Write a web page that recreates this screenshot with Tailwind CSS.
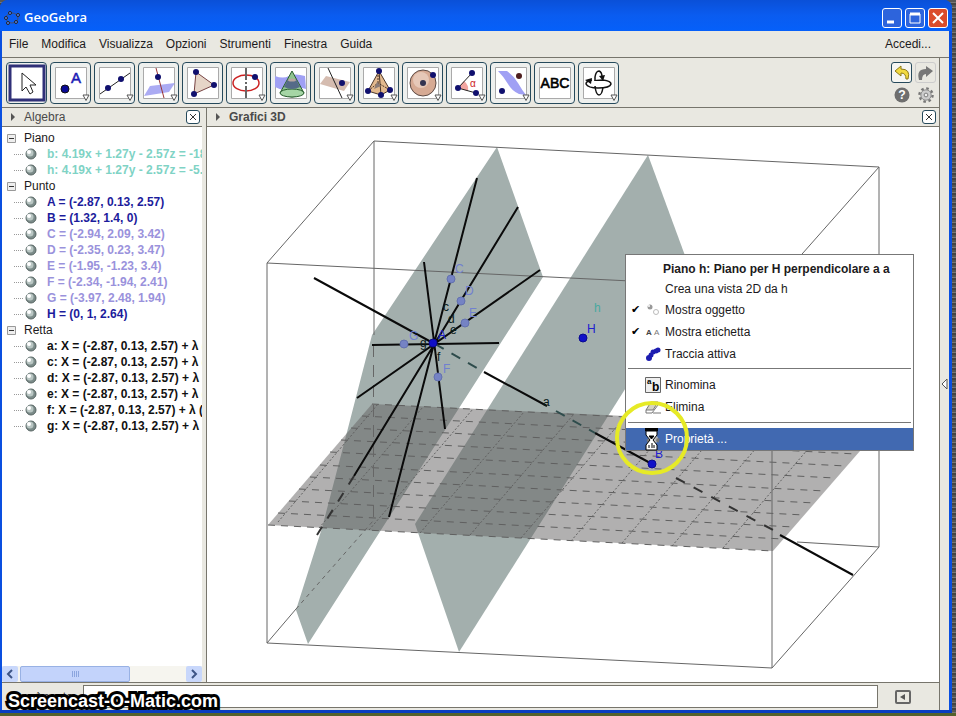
<!doctype html>
<html lang="it">

<head>
    <meta charset="UTF-8">
    <meta name="viewport" content="width=device-width, initial-scale=1.0">
    <title>GeoGebra</title>
    <script src="https://cdn.jsdelivr.net/npm/@tailwindcss/browser@4"></script>
</head>

<body class="h-screen overflow-hidden bg-[#55602c] font-['Liberation_Sans',Arial,sans-serif] text-xs text-[#1c1a20]">
    <!-- Shared icon parts -->
    <svg class="hidden">
        <symbol id="drop" viewBox="0 0 8 8" overflow="visible">
            <path d="M1 1h6L4 6.500z" fill="#fff" stroke="#555" />
        </symbol>
        <symbol id="ball" viewBox="0 0 12 12">
            <circle cx="6" cy="6" r="5" fill="#7b8b89" stroke="#566462" />
            <circle cx="5" cy="5" r="3.500" fill="#b9c6c3" />
            <circle cx="4" cy="4" r="2" fill="#fff" />
        </symbol>
        <symbol id="cross" viewBox="0 0 8 8">
            <path d="M1 1l6 6M7 1l-6 6" stroke="#333" />
        </symbol>
    </svg>

    <div class="flex h-full flex-col pb-[3px]">
        <div class="flex min-h-0 flex-1 bg-[repeating-linear-gradient(#555_0_2px,#777_2px_3px,#444_3px_5px)] pr-1">
            <div class="flex min-w-0 flex-1 flex-col rounded-t-lg border-b-[3px] border-[#0a3cc0] bg-[#0a4fe0]">

                <!-- Title bar -->
                <header
                    class="flex h-[31px] shrink-0 items-center rounded-t-lg bg-linear-to-b from-[#0a50d8] via-[#0a5cf0] to-[#0560fa] pt-1 pr-1 pl-1">
                    <svg class="size-4" viewBox="0 0 16 16">
                        <ellipse cx="8" cy="8" rx="6" ry="5" fill="none" stroke="#444e70" />
                        <g fill="#5a8aff" stroke="#222">
                            <circle cx="2" cy="8" r="1.500" />
                            <circle cx="6" cy="3" r="1.500" />
                            <circle cx="14" cy="5" r="1.500" />
                            <circle cx="12" cy="12" r="1.500" />
                            <circle cx="4" cy="13" r="1.500" />
                        </g>
                    </svg>
                    <h1 class="ml-1 flex-1 font-['Open_Sans',sans-serif] text-[13px] font-semibold text-white">GeoGebra</h1>
                    <div class="flex gap-[3px]">
                        <button aria-label="Riduci" class="size-5 rounded-[3px] border border-white bg-[#2d64dc]">
                            <svg viewBox="0 0 18 18"><path d="M4 13h7" stroke="#fff" stroke-width="3" /></svg>
                        </button>
                        <button aria-label="Ingrandisci" class="size-5 rounded-[3px] border border-white bg-[#2d64dc]">
                            <svg viewBox="0 0 18 18"><path d="M4 5h10v9H4z" fill="none" stroke="#fff" /><path d="M4 5h10" stroke="#fff" stroke-width="3" /></svg>
                        </button>
                        <button aria-label="Chiudi" class="size-5 rounded-[3px] border border-white bg-[#db4c2b]">
                            <svg viewBox="0 0 18 18"><path d="M4 4l10 10M14 4L4 14" stroke="#fff" stroke-width="2" /></svg>
                        </button>
                    </div>
                </header>

                <div class="mr-[3px] ml-0.5 flex min-h-0 flex-1 flex-col bg-[#e9e8e1]">
                    <!-- Menu bar -->
                    <nav class="flex h-[27px] shrink-0 items-center gap-[13px] border-b border-[#77756c] pr-[18px] pl-[7px]">
                        <a href="#">File</a>
                        <a href="#">Modifica</a>
                        <a href="#">Visualizza</a>
                        <a href="#">Opzioni</a>
                        <a href="#">Strumenti</a>
                        <a href="#">Finestra</a>
                        <a href="#" class="flex-1">Guida</a>
                        <a href="#">Accedi...</a>
                    </nav>

                    <div class="flex min-h-0 flex-1">
                        <main class="flex min-w-0 flex-1 flex-col border-r border-[#77756c]">
                            <!-- Toolbar -->
                            <div class="flex h-[50px] shrink-0 items-start justify-between border-b border-[#77756c] pt-1 pr-[3px] pl-1">
                                <div class="flex gap-[3px] *:flex *:h-[42px] *:w-[41px] *:items-center *:justify-center *:rounded *:border *:border-[#264a5c] *:bg-[#eef0ee] **:[svg]:size-8 **:[svg]:overflow-visible">
                                    <button aria-label="Muovi">
                                        <svg viewBox="0 0 32 32">
                                            <path d="M-1-1h34v34H-1z" fill="#fff" stroke="#303078" stroke-width="3" />
                                            <path d="M11 6v18l4-4 4 7 3-2-3-7h6z" fill="#fff" stroke="#222" />
                                        </svg>
                                    </button>
                                    <button aria-label="Punto">
                                        <svg viewBox="0 0 32 32">
                                            <path d="M.5.5h31v31H.5z" fill="#fff" stroke="#aaa" />
                                            <circle cx="10" cy="22" r="4" fill="#0a0a96" stroke="#111" />
                                            <text x="16" y="16" font-size="15" fill="#1a1ab4" stroke="#1a1ab4" stroke-width=".5">A</text>
                                            <use href="#drop" x="27" y="27" width="8" height="8" />
                                        </svg>
                                    </button>
                                    <button aria-label="Retta">
                                        <svg viewBox="0 0 32 32">
                                            <path d="M.5.5h31v31H.5z" fill="#fff" stroke="#aaa" />
                                            <path d="M1 27L31 6" stroke="#222" />
                                            <circle cx="9" cy="21" r="3" fill="#10106e" />
                                            <circle cx="22" cy="12" r="3" fill="#10106e" />
                                            <use href="#drop" x="27" y="27" width="8" height="8" />
                                        </svg>
                                    </button>
                                    <button aria-label="Retta perpendicolare">
                                        <svg viewBox="0 0 32 32">
                                            <path d="M.5.5h31v31H.5z" fill="#fff" stroke="#aaa" />
                                            <path d="M7 19l25-3-6 9-25 4z" fill="#9696f0" fill-opacity=".8" />
                                            <path d="M13 1l8 30" stroke="#933" />
                                            <circle cx="15" cy="10" r="3" fill="#10106e" />
                                            <use href="#drop" x="27" y="27" width="8" height="8" />
                                        </svg>
                                    </button>
                                    <button aria-label="Poligono">
                                        <svg viewBox="0 0 32 32">
                                            <path d="M.5.5h31v31H.5z" fill="#fff" stroke="#aaa" />
                                            <path d="M9 5l18 13L7 27z" fill="#e6d5c8" stroke="#744" />
                                            <g fill="#10106e">
                                                <circle cx="9" cy="5" r="3" />
                                                <circle cx="27" cy="18" r="3" />
                                                <circle cx="7" cy="27" r="3" />
                                            </g>
                                        </svg>
                                    </button>
                                    <button aria-label="Circonferenza">
                                        <svg viewBox="0 0 32 32">
                                            <path d="M.5.5h31v31H.5z" fill="#fff" stroke="#aaa" />
                                            <ellipse cx="15" cy="16" rx="13" ry="8" fill="none" stroke="#c22" stroke-width="1.500" />
                                            <path d="M15 1v12M15 15v2M15 19v12" stroke="#666" stroke-width="2" />
                                            <circle cx="24" cy="10" r="3" fill="#10106e" />
                                            <use href="#drop" x="27" y="27" width="8" height="8" />
                                        </svg>
                                    </button>
                                    <button aria-label="Intersezione">
                                        <svg viewBox="0 0 32 32">
                                            <path d="M.5.5h31v31H.5z" fill="#fff" stroke="#aaa" />
                                            <path d="M0 9q8 3 14 0t16 0l1 13q-8-3-15 0T0 20z" fill="#a0a0f4" />
                                            <path d="M17 4L5 26q12 8 24 0z" fill="#8fc48f" stroke="#275c2d" />
                                            <ellipse cx="17" cy="26" rx="12" ry="4" fill="#a5d5a5" stroke="#275c2d" />
                                            <path d="M13 12h8l4 8q-8 4-16 0z" fill="#556a88" />
                                            <ellipse cx="17" cy="13" rx="4" ry="1.500" fill="#b9a8a0" />
                                        </svg>
                                    </button>
                                    <button aria-label="Piano">
                                        <svg viewBox="0 0 32 32">
                                            <path d="M.5.5h31v31H.5z" fill="#fff" stroke="#aaa" />
                                            <path d="M7 9l24 6-6 9L1 17z" fill="#d5bcb0" />
                                            <path d="M9 1l14 30" stroke="#222" />
                                            <circle cx="23" cy="16" r="3" fill="#10106e" />
                                            <use href="#drop" x="27" y="27" width="8" height="8" />
                                        </svg>
                                    </button>
                                    <button aria-label="Piramide">
                                        <svg viewBox="0 0 32 32">
                                            <path d="M.5.5h31v31H.5z" fill="#fff" stroke="#aaa" />
                                            <path d="M16 4L5 24l13 4 9-5z" fill="#e3b98e" stroke="#4a3528" />
                                            <path d="M16 4l2 24" fill="none" stroke="#4a3528" />
                                            <path d="M5 24l10-8 12 7M15 16V5" fill="none" stroke="#4a3528" stroke-dasharray="2 1" />
                                            <path d="M14 15l4 4-7 3z" fill="#8b7c78" />
                                            <g fill="#10106e">
                                                <circle cx="16" cy="4" r="3" />
                                                <circle cx="5" cy="24" r="3" />
                                                <circle cx="18" cy="28" r="3" />
                                                <circle cx="27" cy="23" r="3" />
                                            </g>
                                            <use href="#drop" x="27" y="27" width="8" height="8" />
                                        </svg>
                                    </button>
                                    <button aria-label="Sfera">
                                        <svg viewBox="0 0 32 32">
                                            <path d="M.5.5h31v31H.5z" fill="#fff" stroke="#aaa" />
                                            <circle cx="16" cy="16" r="13" fill="#d6aa94" stroke="#5c4a44" />
                                            <circle cx="14" cy="13" r="8" fill="#e6c8b8" />
                                            <circle cx="16" cy="16" r="3" fill="#333350" />
                                            <circle cx="26" cy="8" r="3" fill="#10106e" />
                                            <use href="#drop" x="27" y="27" width="8" height="8" />
                                        </svg>
                                    </button>
                                    <button aria-label="Angolo">
                                        <svg viewBox="0 0 32 32">
                                            <path d="M.5.5h31v31H.5z" fill="#fff" stroke="#aaa" />
                                            <path d="M7 21l6-7q5 4 4 10z" fill="#f2a5a0" />
                                            <path d="M21 6L7 21l18 5" fill="none" stroke="#222" />
                                            <g fill="#10106e">
                                                <circle cx="21" cy="6" r="3" />
                                                <circle cx="7" cy="21" r="3" />
                                                <circle cx="25" cy="26" r="3" />
                                            </g>
                                            <text x="19" y="20" font-size="10" fill="#c22">α</text>
                                            <use href="#drop" x="27" y="27" width="8" height="8" />
                                        </svg>
                                    </button>
                                    <button aria-label="Simmetria">
                                        <svg viewBox="0 0 32 32">
                                            <path d="M.5.5h31v31H.5z" fill="#fff" stroke="#aaa" />
                                            <path d="M3 4h9q7 5 11 12t8 12l-7-1q-7-3-11-10T3 4z" fill="#a0a0f4" />
                                            <circle cx="7" cy="24" r="3" fill="#10106e" />
                                            <circle cx="24" cy="9" r="3" fill="#4e1e1e" />
                                            <use href="#drop" x="27" y="27" width="8" height="8" />
                                        </svg>
                                    </button>
                                    <button aria-label="Testo">
                                        <svg viewBox="0 0 32 32">
                                            <path d="M.5.5h31v31H.5z" fill="#fff" stroke="#aaa" />
                                            <text x="16" y="21" font-size="14" text-anchor="middle" fill="#000" stroke="#000" stroke-width=".6">ABC</text>
                                        </svg>
                                    </button>
                                    <button aria-label="Ruota la vista">
                                        <svg viewBox="0 0 32 32">
                                            <path d="M.5.5h31v31H.5z" fill="#fff" stroke="#aaa" />
                                            <g fill="none" stroke="#111" stroke-width="1.500">
                                                <path d="M12 14V10q1-6 4-6 3 1 3 6M12 19q1 9 4 9t4-8" />
                                                <path d="M9 13q-6 1-6 4 2 4 12 4 12 0 13-4 0-3-8-4-8 0-8 1" />
                                            </g>
                                            <path d="M16 9l6-1-2 6zM2 13l7-2-1 6z" fill="#111" />
                                            <use href="#drop" x="27" y="27" width="8" height="8" />
                                        </svg>
                                    </button>
                                </div>
                                <div class="grid grid-cols-2 place-items-center gap-x-[3px] gap-y-1">
                                    <button aria-label="Annulla" class="size-[21px] rounded-[3px] border border-[#264a5c] bg-[#f6f6f2]">
                                        <svg viewBox="0 0 19 19">
                                            <path d="M9 3L3 8l6 5v-3q5 0 5 6h2q3-10-7-10z" fill="#f2da40" stroke="#8d7a18" />
                                        </svg>
                                    </button>
                                    <button aria-label="Ripeti" class="size-[21px] rounded-[3px] border border-[#ccc]">
                                        <svg viewBox="0 0 19 19">
                                            <path d="M10 3l7 5-7 6v-3q-4 0-4 6H3Q0 6 10 6z" fill="#777" />
                                        </svg>
                                    </button>
                                    <button aria-label="Aiuto">
                                        <svg class="size-4" viewBox="0 0 17 17">
                                            <circle cx="8.500" cy="8.500" r="8" fill="#6e6e6e" />
                                            <text x="8.500" y="13" font-size="13" font-weight="bold" text-anchor="middle" fill="#fff">?</text>
                                        </svg>
                                    </button>
                                    <button aria-label="Impostazioni">
                                        <svg class="size-4" viewBox="0 0 17 17">
                                            <circle cx="8.500" cy="8.500" r="7" fill="none" stroke="#777" stroke-width="2.500" stroke-dasharray="2.750" />
                                            <circle cx="8.500" cy="8.500" r="5.500" fill="#ccc" stroke="#888" />
                                            <circle cx="8.500" cy="8.500" r="2" fill="#eee" stroke="#777" />
                                        </svg>
                                    </button>
                                </div>
                            </div>

                            <div class="flex min-h-0 flex-1">
                                <!-- Algebra view -->
                                <aside class="flex w-[205px] shrink-0 flex-col border-r border-[#77756c] pr-1">
                                    <div class="flex h-[19px] shrink-0 items-center border-b border-[#77756c] pr-0.5 pl-2">
                                        <svg class="size-2" viewBox="0 0 8 8"><path d="M1 0l4 4-4 4z" fill="#555" /></svg>
                                        <h2 class="ml-1.5 flex-1 text-[#4a4a4a]">Algebra</h2>
                                        <button aria-label="Chiudi Algebra" class="flex size-3.5 items-center justify-center rounded-[3px] border border-[#264a5c] bg-white">
                                            <svg class="size-2"><use href="#cross" /></svg>
                                        </button>
                                    </div>
                                    <div class="min-h-0 flex-1 overflow-hidden bg-white pt-[3px]">
                                        <ul id="tree" class="leading-4 whitespace-nowrap"></ul>
                                    </div>
                                    <!-- Horizontal scrollbar -->
                                    <div class="flex h-4 shrink-0 bg-[#f6f5ef]">
                                        <button aria-label="Scorri a sinistra" class="flex w-4 items-center justify-center rounded-xs bg-[#c8d7fb]">
                                            <svg class="size-2.5" viewBox="0 0 10 10"><path d="M7 1L3 5l4 4" fill="none" stroke="#3d5486" stroke-width="2" /></svg>
                                        </button>
                                        <div class="flex flex-1 pl-0.5">
                                            <div class="flex w-[110px] items-center justify-center gap-px rounded-xs border border-[#98b1e4] bg-[#c3d3fb]">
                                                <i class="h-1.5 w-px bg-[#8ba5de]"></i>
                                                <i class="h-1.5 w-px bg-[#8ba5de]"></i>
                                                <i class="h-1.5 w-px bg-[#8ba5de]"></i>
                                                <i class="h-1.5 w-px bg-[#8ba5de]"></i>
                                            </div>
                                        </div>
                                        <button aria-label="Scorri a destra" class="flex w-4 items-center justify-center rounded-xs bg-[#c8d7fb]">
                                            <svg class="size-2.5" viewBox="0 0 10 10"><path d="M3 1l4 4-4 4" fill="none" stroke="#3d5486" stroke-width="2" /></svg>
                                        </button>
                                    </div>
                                </aside>

                                <!-- 3D view -->
                                <section class="flex min-w-0 flex-1 flex-col">
                                    <div class="flex h-[19px] shrink-0 items-center border-b border-[#77756c] pr-[3px] pl-2">
                                        <svg class="size-2" viewBox="0 0 8 8"><path d="M1 0l4 4-4 4z" fill="#555" /></svg>
                                        <h2 class="ml-1.5 flex-1 font-bold text-[#4a4a4a]">Grafici 3D</h2>
                                        <button aria-label="Chiudi Grafici 3D" class="flex size-3.5 items-center justify-center rounded-[3px] border border-[#264a5c] bg-white">
                                            <svg class="size-2"><use href="#cross" /></svg>
                                        </button>
                                    </div>
                                    <div class="relative min-h-0 flex-1 bg-white">
                                        <svg class="size-full" viewBox="207 127 732 555" preserveAspectRatio="xMinYMin" font-size="12">
                                            <!-- Planes b and h -->
                                            <g fill="#a3afad">
                                                <path d="M497 147l46 130-235 367-12-34 26-82 25-96 25-97z" />
                                                <path d="M648 155l46 125-235 372-44-128z" />
                                            </g>
                                            <!-- Base plane with its grid -->
                                            <path d="M372 404l508 24-107 123-505-26z" fill="#646262" fill-opacity=".5" />
                                            <g fill="none" stroke="#606060">
                                                <path stroke-dasharray="7 6" d="M372 404l508 26M362 416l505 26M351 428l505 26M341 440l505 26M330 452l505 26M320 465l505 26M310 477l505 26M299 489l505 26M289 501l505 26M278 513l505 26M268 525l505 26" />
                                                <path stroke-dasharray="2 2" d="M278 522l100-118M319 528l104-121M369 530l104-121M420 533l104-121M470 535l104-121M521 538l104-121M571 541l104-121M622 543l104-121M672 546l104-121M723 548l104-121" />
                                            </g>
                                            <!-- Bounding box -->
                                            <g fill="none" stroke="#666">
                                                <path d="M267 643V263l107-122 505 26v380L772 668zM267 263l505 25V668M772 288l107-121M374 141v194M267 643l29-34M797 542l82 5" />
                                                <path stroke-dasharray="4 4" d="M296 609l77-88" />
                                                <path stroke-dasharray="12 8" d="M373.500 345v176" />
                                            </g>
                                            <!-- Lines -->
                                            <g fill="none" stroke="#0a0a0a" stroke-width="2">
                                                <path d="M314 278l119 65M484 372l63 34M595 433l57 31M780 535l73 40M477 178l-88 339M518 207L354 476M540 270L357 398M424 262l21 167M372 345l127-2" />
                                                <path stroke="#2e4c4c" stroke-dasharray="10 9" d="M435 344l49 28M556 411l39 22" />
                                                <path stroke="#333" stroke-dasharray="10 10" d="M354 476l-37 59M676 478l97 52" />
                                            </g>
                                            <!-- Points -->
                                            <g fill="#7583c4" stroke="#6371b0">
                                                <circle cx="451" cy="279" r="4" />
                                                <circle cx="461" cy="301" r="4" />
                                                <circle cx="465" cy="323" r="4" />
                                                <circle cx="404" cy="344" r="4" />
                                                <circle cx="438" cy="377" r="4" />
                                            </g>
                                            <g fill="#1010c8" stroke="#0a0a90">
                                                <circle cx="433" cy="343" r="4" />
                                                <circle cx="583" cy="338" r="4" />
                                                <circle cx="652" cy="464" r="4" />
                                            </g>
                                            <g fill="#7080d0">
                                                <text x="455" y="273">C</text>
                                                <text x="465" y="295">D</text>
                                                <text x="469" y="317">E</text>
                                                <text x="409" y="340">G</text>
                                                <text x="443" y="373">F</text>
                                            </g>
                                            <g fill="#2020d0">
                                                <text x="438" y="339">A</text>
                                                <text x="587" y="333">H</text>
                                                <text x="655" y="458">B</text>
                                            </g>
                                            <g fill="#0a2020">
                                                <text x="543" y="406">a</text>
                                                <text x="420" y="347">g</text>
                                                <text x="437" y="361">f</text>
                                                <text x="448" y="323">d</text>
                                                <text x="450" y="334">e</text>
                                                <text x="443" y="311">c</text>
                                                <text x="594" y="312" fill="#4aa9a0">h</text>
                                            </g>
                                        </svg>

                                        <!-- Context menu of plane h -->
                                        <div class="absolute top-[127px] left-[418px] flex w-[289px] flex-col border border-[#777] bg-white pt-1 *:[button]:flex *:[button]:h-[22px] *:[button]:shrink-0 *:[button]:items-center *:[button]:text-left **:[svg]:mr-1 **:[svg]:size-4">
                                            <h3 class="h-5 pl-[37px] leading-5 font-bold whitespace-nowrap">Piano h: Piano per H perpendicolare a a</h3>
                                            <div class="flex h-5 items-center pl-[39px]"><button>Crea una vista 2D da h</button></div>
                                            <button>
                                                <span class="w-[19px] pl-[5px] font-['DejaVu_Sans',sans-serif] text-[11px] text-black">✔</span>
                                                <svg viewBox="0 0 16 16">
                                                    <circle cx="5" cy="5" r="2.500" fill="#999" />
                                                    <circle cx="4" cy="4" r="1" fill="#fff" />
                                                    <circle cx="11" cy="10" r="2.500" fill="#fff" stroke="#bbb" />
                                                </svg>
                                                Mostra oggetto
                                            </button>
                                            <button>
                                                <span class="w-[19px] pl-[5px] font-['DejaVu_Sans',sans-serif] text-[11px] text-black">✔</span>
                                                <svg viewBox="0 0 16 16" font-size="8">
                                                    <text x="1" y="11" font-weight="bold" fill="#444">A</text>
                                                    <text x="9" y="11" fill="#777">A</text>
                                                </svg>
                                                Mostra etichetta
                                            </button>
                                            <button class="pl-[19px]">
                                                <svg viewBox="0 0 16 16" fill="#1c1cb0">
                                                    <circle cx="4" cy="12" r="3" />
                                                    <circle cx="6" cy="9" r="2.500" />
                                                    <circle cx="8" cy="6" r="2.500" />
                                                    <circle cx="11" cy="5" r="2.500" />
                                                    <circle cx="13" cy="4" r="2.500" />
                                                </svg>
                                                Traccia attiva
                                            </button>
                                            <hr class="mx-0.5 mt-[3px] mb-[5px] border-[#777]">
                                            <button class="pl-[19px]">
                                                <svg viewBox="0 0 16 16">
                                                    <path d="M.5.5h15v15H.5z" fill="#eee" stroke="#666" />
                                                    <text x="2" y="7" font-size="8" font-weight="bold">a</text>
                                                    <text x="7" y="14" font-size="12" font-weight="bold">b</text>
                                                </svg>
                                                Rinomina
                                            </button>
                                            <button class="pl-[19px]">
                                                <svg viewBox="0 0 16 16">
                                                    <path d="M1 11L6 3h7L8 11z" fill="#d5d3c4" stroke="#777" />
                                                    <path d="M1 11v3h6l6-8V3M8 14h8" fill="none" stroke="#777" />
                                                </svg>
                                                Elimina
                                            </button>
                                            <hr class="mx-0.5 mt-1 mb-[5px] border-[#777]">
                                            <button class="bg-[#4169b1] pl-[19px] text-white">
                                                <svg viewBox="0 0 16 16">
                                                    <circle cx="8" cy="8" r="5" fill="#bbb" stroke="#777" stroke-width="3" stroke-dasharray="3" />
                                                </svg>
                                                Proprietà ...
                                            </button>
                                        </div>

                                        <!-- Pointer with its highlight ring -->
                                        <svg class="pointer-events-none absolute top-[273px] left-[407px] h-20 w-20" viewBox="614 400 80 80">
                                            <circle cx="652" cy="438" r="35" fill="none" stroke="#e6ea26" stroke-width="4" />
                                            <path d="M646 431h11v4l-4 5 4 5v5h-11v-5l4-5-4-5z" fill="#fff" stroke="#000" />
                                            <path d="M645 428h13v3h-13z" />
                                            <path d="M649 436h5l-2.500 3zM649 448v-3M652 448v-5M654 448v-3" stroke="#000" />
                                        </svg>
                                    </div>
                                </section>
                            </div>

                            <!-- Input bar -->
                            <footer class="flex h-7 shrink-0 items-center border-t border-[#77756c] pl-2">
                                <label for="cmd" class="w-[73px]">Inserimento:</label>
                                <input id="cmd" type="text" class="h-[23px] min-w-0 flex-1 border border-[#77756c] bg-white px-1">
                                <button aria-label="Aiuto inserimento" class="mr-7 ml-[17px]">
                                    <svg class="size-4" viewBox="0 0 16 16">
                                        <rect x="1" y="2" width="14" height="12" rx="1" fill="none" stroke="#666" stroke-width="2" />
                                        <path d="M10 5v6L5 8z" fill="#555" />
                                    </svg>
                                </button>
                            </footer>
                        </main>

                        <!-- Side strip that opens the perspectives -->
                        <button aria-label="Disposizioni" class="flex w-[9px] shrink-0 items-center justify-center">
                            <svg class="h-3 w-[7px]" viewBox="0 0 7 12"><path d="M6 1v10L1 6z" fill="#fff" stroke="#555" /></svg>
                        </button>
                    </div>
                </div>
            </div>
        </div>
    </div>

    <!-- Recorder watermark -->
    <p class="absolute bottom-[3px] left-2 text-lg leading-6 font-bold text-white [-webkit-text-stroke:6px_black] [paint-order:stroke_fill]">Screencast-O-Matic.com</p>

    <script>
        const groups = [
            ['Piano', [
                ['b: 4.19x + 1.27y - 2.57z = -18.3', 'text-[#7fd3c5]'],
                ['h: 4.19x + 1.27y - 2.57z = -5.5', 'text-[#7fd3c5]'],
            ]],
            ['Punto', [
                ['A = (-2.87, 0.13, 2.57)', 'text-[#1c1c9c]'],
                ['B = (1.32, 1.4, 0)', 'text-[#1c1c9c]'],
                ['C = (-2.94, 2.09, 3.42)', 'text-[#9a92dc]'],
                ['D = (-2.35, 0.23, 3.47)', 'text-[#9a92dc]'],
                ['E = (-1.95, -1.23, 3.4)', 'text-[#9a92dc]'],
                ['F = (-2.34, -1.94, 2.41)', 'text-[#9a92dc]'],
                ['G = (-3.97, 2.48, 1.94)', 'text-[#9a92dc]'],
                ['H = (0, 1, 2.64)', 'text-[#1c1c9c]'],
            ]],
            ['Retta', ['a', 'c', 'd', 'e', 'f', 'g'].map(n =>
                [n + ': X = (-2.87, 0.13, 2.57) + λ (4.19, 1.27, -2.57)', 'text-[#111111]'])],
        ];

        document.getElementById('tree').innerHTML = groups.map(([name, rows]) => `
            <li>
                <div class="flex h-4 items-center pl-[5px]">
                    <svg class="mr-2 size-[9px]" viewBox="0 0 9 9"><path d="M.5.5h8v8h-8z" fill="#eee" stroke="#999"/><path d="M2 4.500h5" stroke="#333"/></svg>
                    ${name}
                </div>
                <ul>${rows.map(([text, color]) => `
                    <li class="flex h-4 items-center pl-3 font-bold ${color}">
                        <i class="w-[9px] shrink-0 border-t border-dotted border-[#999]"></i>
                        <svg class="mx-0.5 size-3 shrink-0"><use href="#ball"/></svg>
                        <span class="ml-2">${text}</span>
                    </li>`).join('')}
                </ul>
            </li>`).join('');
    </script>
</body>

</html>
